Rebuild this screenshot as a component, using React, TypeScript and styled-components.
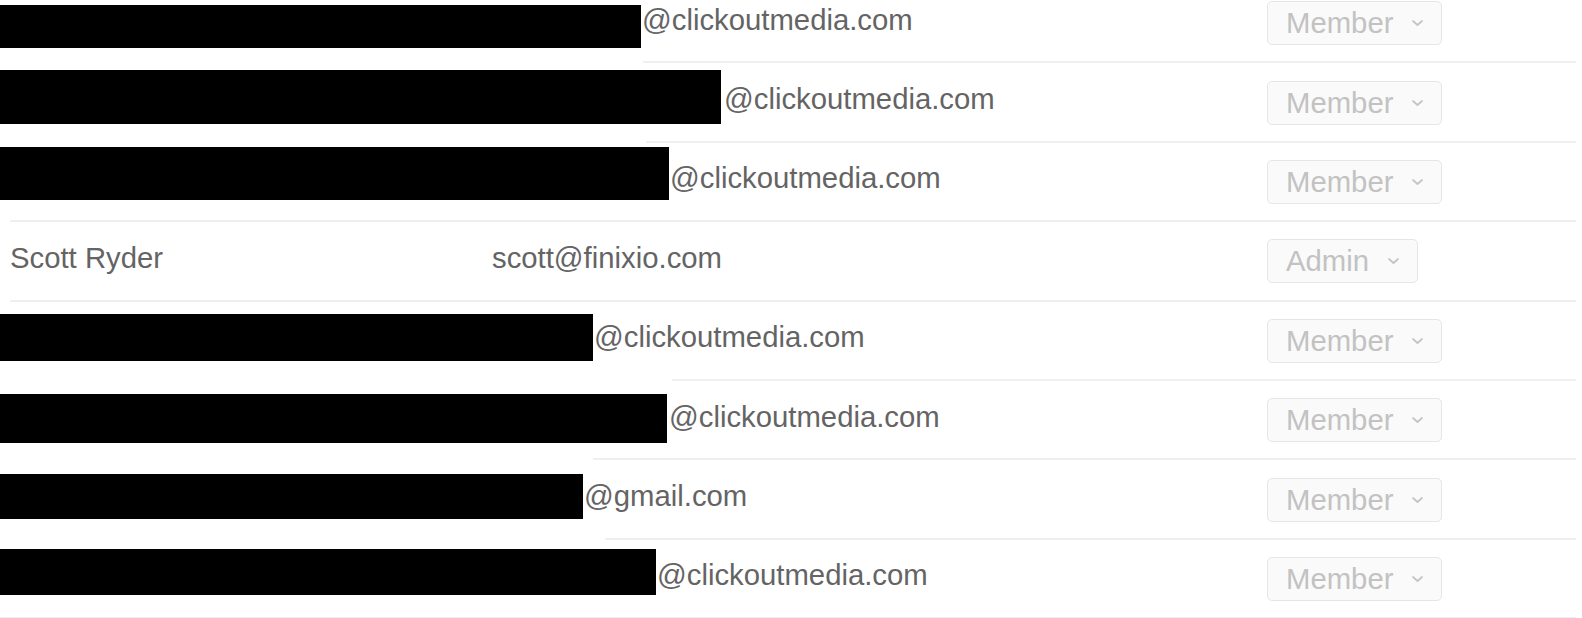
import React from 'react';
import styled, { createGlobalStyle } from 'styled-components';

// Types
interface Member {
  id: number;
  name?: string;
  email: string;
  role: 'Member' | 'Admin';
  // redaction box covering name + local part of the email
  redact?: { width: number; top: number; height: number; gap: number };
  lineStart: number;
}

const GlobalStyle = createGlobalStyle`
  html, body {
    margin: 0;
    padding: 0;
    background: #ffffff;
  }
  body {
    font-family: 'Liberation Sans', Arial, sans-serif;
  }
`;

const Table = styled.div`
  display: flex;
  flex-direction: column;
  margin-top: -16px;
`;

const Row = styled.div`
  display: grid;
  grid-template-columns: 492px 775px 1fr;
  align-items: center;
  height: 77.4px;
  font-size: 29.3px;
  color: #646464;
`;

const NameCell = styled.div`
  padding-left: 10px;
  margin-bottom: 6px;
  white-space: nowrap;
`;

const EmailCell = styled.div`
  margin-bottom: 6px;
  white-space: nowrap;
`;

const RedactedCell = styled.div`
  grid-column: 1 / span 2;
  display: flex;
  align-items: center;
  height: 100%;
  white-space: nowrap;
`;

const RedactBox = styled.div<{ $width: number; $top: number; $height: number; $gap: number }>`
  align-self: flex-start;
  flex: none;
  width: ${p => p.$width}px;
  height: ${p => p.$height}px;
  margin-top: ${p => p.$top}px;
  margin-right: ${p => p.$gap}px;
  background: #000000;
`;

const DomainText = styled.span`
  margin-bottom: 6px;
`;

const RoleCell = styled.div`
  display: flex;
  align-items: center;
  padding-top: 1px;
`;

const RoleSelect = styled.div`
  display: inline-flex;
  align-items: center;
  gap: 18px;
  height: 44px;
  box-sizing: border-box;
  padding: 0 17px 0 18px;
  border: 1.5px solid #e6e6e6;
  border-radius: 5px;
  background: #fafafa;
  color: #c2c2c2;
  font-size: 29.3px;
`;

const Chevron = styled.svg`
  width: 13px;
  height: 8px;
  flex: none;
`;

const Divider = styled.div<{ $start: number }>`
  height: 2px;
  margin-left: ${p => p.$start}px;
  margin-right: 6px;
  background: #efefef;
`;

const members: Member[] = [
  { id: 1, email: '@clickoutmedia.com', role: 'Member', redact: { width: 641, top: 21, height: 43, gap: 1 }, lineStart: 643 },
  { id: 2, email: '@clickoutmedia.com', role: 'Member', redact: { width: 721, top: 7, height: 54, gap: 3 }, lineStart: 646 },
  { id: 3, email: '@clickoutmedia.com', role: 'Member', redact: { width: 669, top: 4, height: 53, gap: 1 }, lineStart: 10 },
  { id: 4, name: 'Scott Ryder', email: 'scott@finixio.com', role: 'Admin', lineStart: 10 },
  { id: 5, email: '@clickoutmedia.com', role: 'Member', redact: { width: 593, top: 12, height: 47, gap: 1 }, lineStart: 672 },
  { id: 6, email: '@clickoutmedia.com', role: 'Member', redact: { width: 667, top: 13, height: 49, gap: 2 }, lineStart: 593 },
  { id: 7, email: '@gmail.com', role: 'Member', redact: { width: 583, top: 14, height: 45, gap: 1 }, lineStart: 605 },
  { id: 8, email: '@clickoutmedia.com', role: 'Member', redact: { width: 656, top: 9, height: 46, gap: 1 }, lineStart: 0 },
];

function App() {
  return (
    <>
      <GlobalStyle />
      <Table>
        {members.map(m => (
          <React.Fragment key={m.id}>
            <Row>
              {m.redact ? (
                <RedactedCell>
                  <RedactBox
                    $width={m.redact.width}
                    $top={m.redact.top}
                    $height={m.redact.height}
                    $gap={m.redact.gap}
                  />
                  <DomainText>{m.email}</DomainText>
                </RedactedCell>
              ) : (
                <>
                  <NameCell>{m.name}</NameCell>
                  <EmailCell>{m.email}</EmailCell>
                </>
              )}
              <RoleCell>
                <RoleSelect>
                  {m.role}
                  <Chevron viewBox="0 0 13 8">
                    <path d="M2 2l4.5 4 4.5-4" fill="none" stroke="#c4c4c4" strokeWidth="1.7" strokeLinecap="round" strokeLinejoin="round" />
                  </Chevron>
                </RoleSelect>
              </RoleCell>
            </Row>
            <Divider $start={m.lineStart} />
          </React.Fragment>
        ))}
      </Table>
    </>
  );
}

export default App;
